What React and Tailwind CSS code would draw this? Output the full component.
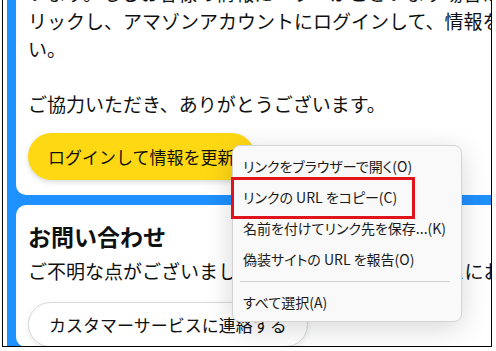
import React from 'react';

const menuItems = [
  'リンクをブラウザーで開く(O)',
  'リンクの URL をコピー(C)',
  '名前を付けてリンク先を保存...(K)',
  '偽装サイトの URL を報告(O)',
];

const ContextMenu = () => (
  <div className="absolute left-[232px] top-[145px] w-[230px] h-[177px] rounded-[8px] border border-[#d4d4d4] bg-[#f9f9f9] pt-[5px] shadow-[0_6px_28px_rgba(0,0,0,0.16)] text-[14px] text-[#1b1b1b] [font-feature-settings:'palt']">
    {menuItems.map((label) => (
      <div key={label} className="h-[31px] px-[10px] flex items-center whitespace-nowrap">
        {label}
      </div>
    ))}
    <div className="h-[12px] flex items-center">
      <div className="ml-[7px] mr-[11px] h-px flex-1 bg-[#d0d0d0]" />
    </div>
    <div className="h-[31px] px-[10px] flex items-center">すべて選択(A)</div>
  </div>
);

export default function App() {
  return (
    <div className="relative w-[496px] h-[351px] overflow-hidden bg-white text-[#0f1111] font-['Noto_Sans_CJK_JP','Noto_Sans',sans-serif]">
      <div className="ml-[2px] w-[490px] h-[347px] border-x border-b border-black overflow-hidden flex bg-white">
        <div className="ml-[4px] flex-1 bg-[#1e90ff] pl-[9px] flex flex-col gap-[10px]">
          {/* notice card, scrolled so its top is cut off */}
          <div className="mt-[-21px] w-[520px] shrink-0 rounded-[10px] bg-white px-[12px] pb-[15px]">
            <p className="text-[19px] leading-[28px] whitespace-nowrap mb-[27px]">
              います。もしお客様の情報にエラーがございます場合は、下記をク
              <br />
              リックし、アマゾンアカウントにログインして、情報を更新してくださ
              <br />
              い。
            </p>
            <p className="text-[19px] leading-[28px] mb-[15px]">ご協力いただき、ありがとうございます。</p>
            <button className="h-[47px] px-[20px] rounded-full bg-[#ffd814] text-[17px] shadow-[0_2px_5px_rgba(180,180,180,0.5)]">
              ログインして情報を更新
            </button>
          </div>

          <div className="w-[520px] flex-1 rounded-[10px] bg-white px-[12px] pt-[15px]">
            <h3 className="text-[23px] font-bold leading-[32px]">お問い合わせ</h3>
            <p className="mt-[5px] text-[19px] leading-[28px] whitespace-nowrap">
              ご不明な点がございましたら、カスタマーサービスにお問い合わせください。
            </p>
            <button className="mt-[17px] h-[45px] px-[20px] rounded-full border border-[#d5d9d9] bg-white text-[17px] shadow-[0_2px_5px_rgba(213,217,217,0.5)]">
              カスタマーサービスに連絡する
            </button>
          </div>
        </div>
      </div>

      <ContextMenu />
      <div className="absolute left-[231px] top-[177px] w-[184px] h-[42px] border-[3px] border-[#e0141b]" />
    </div>
  );
}
